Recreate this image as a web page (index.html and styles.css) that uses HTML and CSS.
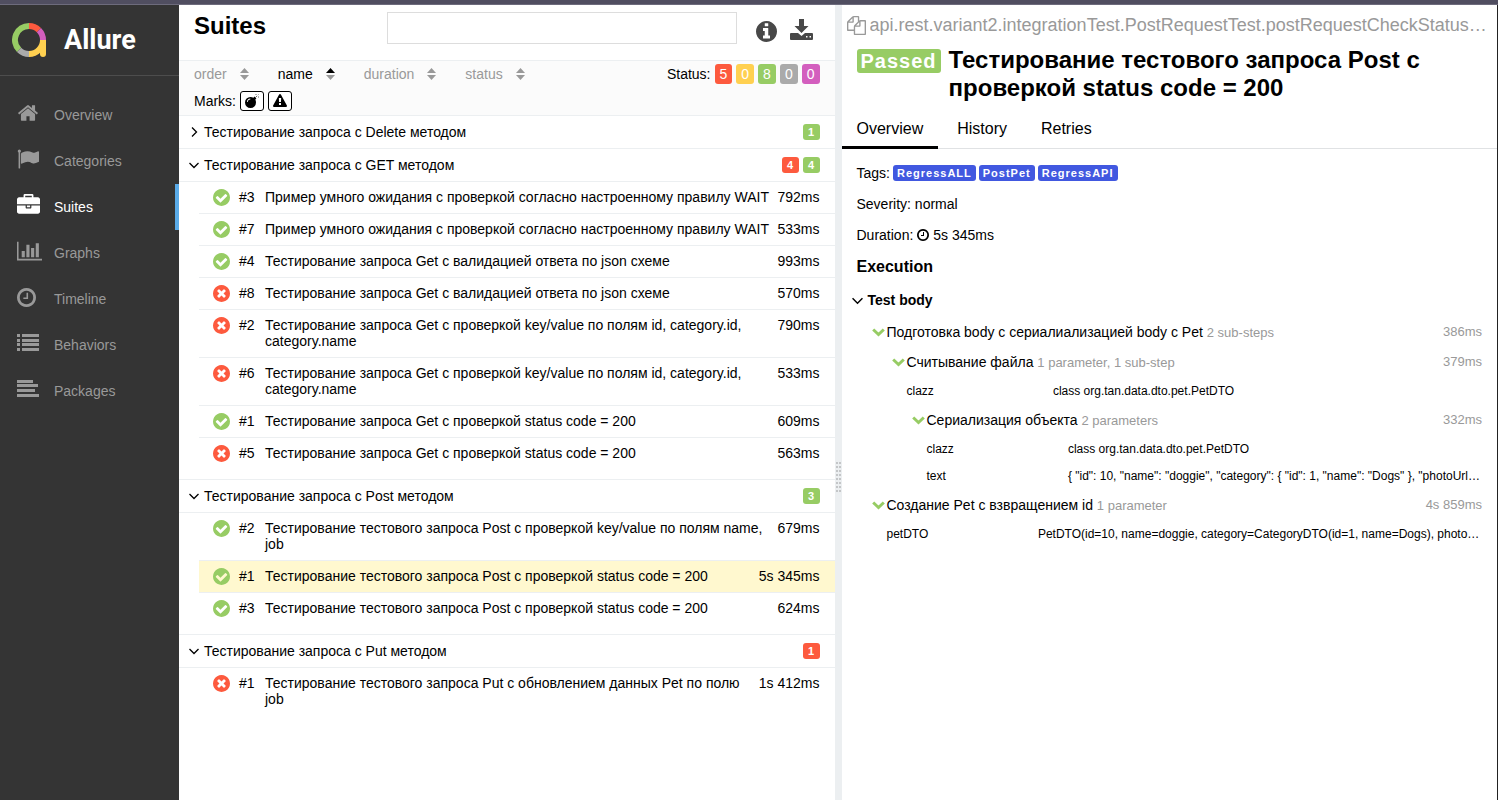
FILE: index.html
```html
<!DOCTYPE html>
<html lang="ru">
<head>
<meta charset="utf-8">
<title>Allure Report</title>
<link rel="stylesheet" href="styles.css">
</head>
<body>
<svg class="sprite" aria-hidden="true">
  <symbol id="home" viewBox="0 0 1792 1792"><path d="M1472 992v480q0 26-19 45t-45 19h-384v-384h-256v384h-384q-26 0-45-19t-19-45v-480q0-1 .5-3t.5-3l575-474 575 474q1 2 1 6zm223-69l-62 74q-8 9-21 11h-3q-13 0-21-7l-692-577-692 577q-12 8-24 7-13-2-21-11l-62-74q-8-10-7-23.5t11-21.5l719-599q32-26 76-26t76 26l244 204v-195q0-14 9-23t23-9h192q14 0 23 9t9 23v408l219 182q10 8 11 21.5t-7 23.5z"/></symbol>
  <symbol id="flag" viewBox="0 0 1792 1792"><path d="M320 256q0 72-64 110v1266q0 13-9.500 22.500t-22.500 9.500h-64q-13 0-22.500-9.500t-9.500-22.500v-1266q-64-38-64-110 0-53 37.500-90.500t90.500-37.500 90.500 37.500 37.500 90.500zm1472 64v763q0 25-12.500 38.500t-39.500 27.500q-215 116-369 116-61 0-123.500-22t-108.500-48-115.500-48-142.500-22q-192 0-464 146-17 9-33 9-26 0-45-19t-19-45v-742q0-32 31-55 21-14 79-43 236-120 421-120 107 0 200 29t219 88q38 19 88 19 54 0 117.500-21t110-47 88-47 54.500-21q26 0 45 19t19 45z"/></symbol>
  <symbol id="briefcase" viewBox="0 0 1792 1792"><path d="M640 256h512v-128h-512v128zm1152 640v480q0 66-47 113t-113 47h-1472q-66 0-113-47t-47-113v-480h672v160q0 26 19 45t45 19h320q26 0 45-19t19-45v-160h672zm-768 0v128h-256v-128h256zm768-480v384h-1792v-384q0-66 47-113t113-47h352v-160q0-40 28-68t68-28h576q40 0 68 28t28 68v160h352q66 0 113 47t47 113z"/></symbol>
  <symbol id="chart" viewBox="0 0 2048 1792"><path d="M640 896v512h-256v-512h256zm384-512v1024h-256v-1024h256zm1024 1152v128h-2048v-1536h128v1408h1920zm-640-896v768h-256v-768h256zm384-384v1152h-256v-1152h256z"/></symbol>
  <symbol id="clock" viewBox="128 128 1536 1536"><path d="M1024 544v448q0 14-9 23t-23 9h-320q-14 0-23-9t-9-23v-64q0-14 9-23t23-9h224v-352q0-14 9-23t23-9h64q14 0 23 9t9 23zm416 352q0-148-73-273t-198-198-273-73-273 73-198 198-73 273 73 273 198 198 273 73 273-73 198-198 73-273zm224 0q0 209-103 385.500t-279.500 279.500-385.500 103-385.500-103-279.500-279.500-103-385.500 103-385.500 279.500-279.500 385.500-103 385.500 103 279.500 279.500 103 385.500z"/></symbol>
  <symbol id="list" viewBox="0 0 22 18"><path d="M0 0h3v3H0zM5 0h17v3H5zM0 5h3v3H0zM5 5h17v3H5zM0 9h3v3H0zM5 9h17v3H5zM0 14h3v3H0zM5 14h17v3H5z"/></symbol>
  <symbol id="align" viewBox="0 0 22 18"><path d="M0 0h16v3H0zM0 4h21v3H0zM0 9h18v3H0zM0 14h22v3H0z"/></symbol>
  <symbol id="info" viewBox="128 128 1536 1536"><path d="M1152 1376v-160q0-14-9-23t-23-9h-96v-512q0-14-9-23t-23-9h-320q-14 0-23 9t-9 23v160q0 14 9 23t23 9h96v320h-96q-14 0-23 9t-9 23v160q0 14 9 23t23 9h448q14 0 23-9t9-23zm-128-896v-160q0-14-9-23t-23-9h-192q-14 0-23 9t-9 23v160q0 14 9 23t23 9h192q14 0 23-9t9-23zm640 416q0 209-103 385.500t-279.500 279.500-385.500 103-385.500-103-279.500-279.500-103-385.500 103-385.500 279.500-279.500 385.500-103 385.500 103 279.500 279.500 103 385.500z"/></symbol>
  <symbol id="download" viewBox="0 0 23 21"><path fill-rule="evenodd" d="M9 0h5v7h4.500l-7 7-7-7H9zM1 14h7l3.500 3 3.500-3h7q1 0 1 1v5q0 1-1 1H1q-1 0-1-1v-5q0-1 1-1zm15 3v1.500h1.500V17zm3.500 0v1.500H21V17z"/></symbol>
  <symbol id="passed" viewBox="128 128 1536 1536"><path d="M1412 734q0-28-18-46l-91-90q-19-19-45-19t-45 19l-408 407-226-226q-19-19-45-19t-45 19l-91 90q-18 18-18 46 0 27 18 45l362 362q19 19 45 19 27 0 46-19l543-543q18-18 18-45zm252 162q0 209-103 385.500t-279.500 279.500-385.500 103-385.500-103-279.500-279.500-103-385.500 103-385.500 279.500-279.500 385.500-103 385.500 103 279.500 279.500 103 385.500z"/></symbol>
  <symbol id="failed" viewBox="128 128 1536 1536"><path d="M1277 1122q0-26-19-45l-181-181 181-181q19-19 19-45 0-27-19-46l-90-90q-19-19-46-19-26 0-45 19l-181 181-181-181q-19-19-45-19-27 0-46 19l-90 90q-19 19-19 46 0 26 19 45l181 181-181 181q-19 19-19 45 0 27 19 46l90 90q19 19 46 19 26 0 45-19l181-181 181 181q19 19 45 19 27 0 46-19l90-90q19-19 19-46zm387-226q0 209-103 385.500t-279.500 279.500-385.500 103-385.500-103-279.500-279.500-103-385.500 103-385.500 279.500-279.500 385.500-103 385.500 103 279.500 279.500 103 385.500z"/></symbol>
  <symbol id="warning" viewBox="0 0 1792 1792"><path d="M1024 1375v-190q0-14-9.500-23.500t-22.500-9.500h-192q-13 0-22.500 9.500t-9.500 23.500v190q0 14 9.500 23.500t22.500 9.500h192q13 0 22.500-9.500t9.500-23.500zm-2-374l18-459q0-12-10-19-13-11-24-11h-220q-11 0-24 11-10 7-10 21l17 457q0 10 10 16.500t24 6.500h185q14 0 23.500-6.500t10.500-16.500zm-14-934l768 1408q35 63-2 126-17 29-46.500 46t-63.500 17h-1536q-34 0-63.500-17t-46.500-46q-37-63-2-126l768-1408q17-31 47-49t65-18 65 18 47 49z"/></symbol>
  <symbol id="bomb" viewBox="0 0 14 14"><path fill-rule="evenodd" d="M5.500 3c1.200 0 2 .2 2.900.7L9.500 2.600l1.900 1.900-1.100 1.100c.5.900.7 1.800.7 2.900A5.500 5.500 0 1 1 5.500 3zM2 8h.8c0-1.500 1-2.500 2.500-2.600v-.8C3.300 4.700 2 6 2 8z"/><path d="M10.500 3.500L12 2M11 1V0M13 3h1M12.800 1.200l.7-.7" fill="none" stroke="currentColor" stroke-width=".6"/></symbol>
  <symbol id="copy" viewBox="0 0 1792 1792"><path d="M1696 384q40 0 68 28t28 68v1216q0 40-28 68t-68 28h-960q-40 0-68-28t-28-68v-288h-544q-40 0-68-28t-28-68v-672q0-40 20-88t48-76l408-408q28-28 76-48t88-20h416q40 0 68 28t28 68v328q68-40 128-40h416zm-544 213l-299 299h299v-299zm-640-384l-299 299h299v-299zm196 647l316-316v-416h-384v416q0 40-28 68t-68 28h-416v640h512v-256q0-40 20-88t48-76zm956 804v-1152h-384v416q0 40-28 68t-68 28h-416v640h896z"/></symbol>
  <symbol id="down" viewBox="0 0 10 10"><path d="M.5 3L5 7.500 9.500 3" fill="none" stroke="currentColor" stroke-width="1.300"/></symbol>
  <symbol id="right" viewBox="0 0 10 10"><path d="M3 .5L7.500 5 3 9.500" fill="none" stroke="currentColor" stroke-width="1.300"/></symbol>
  <symbol id="chevron" viewBox="0 0 13 9"><path d="M1.200 1.500L6.500 6.500 11.800 1.500" fill="none" stroke="currentColor" stroke-width="3"/></symbol>
  <symbol id="sort" viewBox="0 0 9 12"><path d="M4.500 0L9 5H0z"/><path fill="#999" d="M4.500 12L9 7H0z"/></symbol>
</svg>

<div class="topbar"></div>
<div class="app">
  <nav class="side">
    <a class="brand" href="#">
      <svg class="logo" viewBox="0 0 34 34" stroke-width="6">
        <path stroke="#97cc64" d="M17 3A14 14 0 0 0 7.100 26.900"/>
        <path stroke="#aaa" d="M7.100 26.900A14 14 0 0 0 17 31"/>
        <path stroke="#fd5a3e" d="M17 3A14 14 0 0 1 26.900 7.100"/>
        <path stroke="#d35ebe" d="M26.900 7.100A14 14 0 0 1 31 17"/>
        <path stroke="#ffd050" d="M17 31A14 14 0 0 0 31 17"/>
        <path stroke="#ffd050" stroke-linecap="round" d="M31 20V31"/>
        <path stroke="#ffd050" d="M31 17V24"/>
      </svg>
      <span>Allure</span>
    </a>
    <ul class="menu">
      <li><a href="#"><span class="menu-icon"><svg class="i22"><use href="#home"/></svg></span>Overview</a></li>
      <li><a href="#"><span class="menu-icon"><svg class="i22"><use href="#flag"/></svg></span>Categories</a></li>
      <li><a href="#" class="current" aria-current="page"><span class="menu-icon"><svg class="i24"><use href="#briefcase"/></svg></span>Suites</a></li>
      <li><a href="#"><span class="menu-icon"><svg class="wide"><use href="#chart"/></svg></span>Graphs</a></li>
      <li><a href="#"><span class="menu-icon"><svg class="i19"><use href="#clock"/></svg></span>Timeline</a></li>
      <li><a href="#"><span class="menu-icon"><svg class="bars"><use href="#list"/></svg></span>Behaviors</a></li>
      <li><a href="#"><span class="menu-icon"><svg class="bars"><use href="#align"/></svg></span>Packages</a></li>
    </ul>
  </nav>

  <main class="pane">
    <header class="pane-head">
      <h1>Suites</h1>
      <input class="search" type="text" aria-label="Search">
      <button class="tool" aria-label="Info"><svg class="i21"><use href="#info"/></svg></button>
      <button class="tool" aria-label="Download"><svg class="dl"><use href="#download"/></svg></button>
    </header>
    <div class="filters">
      <div class="filter-line">
        <button class="sorter">order<svg><use href="#sort"/></svg></button>
        <button class="sorter active">name<svg><use href="#sort"/></svg></button>
        <button class="sorter">duration<svg><use href="#sort"/></svg></button>
        <button class="sorter">status<svg><use href="#sort"/></svg></button>
        <div class="statuses"><span>Status:</span>
          <button class="st red">5</button><button class="st yellow">0</button><button class="st green">8</button><button class="st gray">0</button><button class="st purple">0</button>
        </div>
      </div>
      <div class="filter-line marks"><span>Marks:</span>
        <button class="mark" aria-label="Flaky"><svg><use href="#bomb"/></svg></button>
        <button class="mark" aria-label="New failed"><svg><use href="#warning"/></svg></button>
      </div>
    </div>
    <div class="tree">
      <section>
        <button class="group"><svg><use href="#right"/></svg><span class="name">Тестирование запроса с Delete методом</span><span class="count green">1</span></button>
      </section>
      <section>
        <button class="group"><svg><use href="#down"/></svg><span class="name">Тестирование запроса с GET методом</span><span class="count red">4</span><span class="count green">4</span></button>
        <div class="tests">
          <a class="test" href="#"><svg class="ok"><use href="#passed"/></svg><span class="num">#3</span><span class="name">Пример умного ожидания с проверкой согласно настроенному правилу WAIT</span><span class="time">792ms</span></a>
          <a class="test" href="#"><svg class="ok"><use href="#passed"/></svg><span class="num">#7</span><span class="name">Пример умного ожидания с проверкой согласно настроенному правилу WAIT</span><span class="time">533ms</span></a>
          <a class="test" href="#"><svg class="ok"><use href="#passed"/></svg><span class="num">#4</span><span class="name">Тестирование запроса Get с валидацией ответа по json схеме</span><span class="time">993ms</span></a>
          <a class="test" href="#"><svg class="bad"><use href="#failed"/></svg><span class="num">#8</span><span class="name">Тестирование запроса Get с валидацией ответа по json схеме</span><span class="time">570ms</span></a>
          <a class="test" href="#"><svg class="bad"><use href="#failed"/></svg><span class="num">#2</span><span class="name">Тестирование запроса Get с проверкой key/value по полям id, category.id, category.name</span><span class="time">790ms</span></a>
          <a class="test" href="#"><svg class="bad"><use href="#failed"/></svg><span class="num">#6</span><span class="name">Тестирование запроса Get с проверкой key/value по полям id, category.id, category.name</span><span class="time">533ms</span></a>
          <a class="test" href="#"><svg class="ok"><use href="#passed"/></svg><span class="num">#1</span><span class="name">Тестирование запроса Get с проверкой status code = 200</span><span class="time">609ms</span></a>
          <a class="test" href="#"><svg class="bad"><use href="#failed"/></svg><span class="num">#5</span><span class="name">Тестирование запроса Get с проверкой status code = 200</span><span class="time">563ms</span></a>
        </div>
      </section>
      <section>
        <button class="group"><svg><use href="#down"/></svg><span class="name">Тестирование запроса с Post методом</span><span class="count green">3</span></button>
        <div class="tests">
          <a class="test" href="#"><svg class="ok"><use href="#passed"/></svg><span class="num">#2</span><span class="name">Тестирование тестового запроса Post с проверкой key/value по полям name, job</span><span class="time">679ms</span></a>
          <a class="test selected" href="#"><svg class="ok"><use href="#passed"/></svg><span class="num">#1</span><span class="name">Тестирование тестового запроса Post с проверкой status code = 200</span><span class="time">5s 345ms</span></a>
          <a class="test" href="#"><svg class="ok"><use href="#passed"/></svg><span class="num">#3</span><span class="name">Тестирование тестового запроса Post с проверкой status code = 200</span><span class="time">624ms</span></a>
        </div>
      </section>
      <section>
        <button class="group"><svg><use href="#down"/></svg><span class="name">Тестирование запроса с Put методом</span><span class="count red">1</span></button>
        <div class="tests">
          <a class="test" href="#"><svg class="bad"><use href="#failed"/></svg><span class="num">#1</span><span class="name">Тестирование тестового запроса Put с обновлением данных Pet по полю job</span><span class="time">1s 412ms</span></a>
        </div>
      </section>
    </div>
  </main>

  <div class="gutter"><span class="grip"></span></div>

  <article class="pane detail">
    <div class="path"><button class="copy" aria-label="Copy"><svg><use href="#copy"/></svg></button><span class="clip">api.rest.variant2.integrationTest.PostRequestTest.postRequestCheckStatusCode</span></div>
    <div class="title"><span class="verdict">Passed</span><h2>Тестирование тестового запроса Post с проверкой status code = 200</h2></div>
    <nav class="tabs"><a href="#" class="on">Overview</a><a href="#">History</a><a href="#">Retries</a></nav>
    <div class="body">
      <div class="fact tags"><span>Tags:</span><span class="tag">RegressALL</span><span class="tag">PostPet</span><span class="tag">RegressAPI</span></div>
      <div class="fact">Severity: normal</div>
      <div class="fact">Duration: <svg class="mini"><use href="#clock"/></svg> 5s 345ms</div>
      <h3>Execution</h3>
      <button class="stage"><svg><use href="#down"/></svg>Test body</button>
      <div class="nest">
        <button class="step"><svg><use href="#chevron"/></svg><span>Подготовка body с сериалиализацией body с Pet <small>2 sub-steps</small></span><small class="took">386ms</small></button>
        <div class="nest">
          <button class="step"><svg><use href="#chevron"/></svg><span>Считывание файла <small>1 parameter, 1 sub-step</small></span><small class="took">379ms</small></button>
          <div class="params"><table><tr><th>clazz</th><td>class org.tan.data.dto.pet.PetDTO</td></tr></table></div>
          <div class="nest">
            <button class="step"><svg><use href="#chevron"/></svg><span>Сериализация объекта <small>2 parameters</small></span><small class="took">332ms</small></button>
            <div class="params"><table><tr><th>clazz</th><td>class org.tan.data.dto.pet.PetDTO</td></tr><tr><th>text</th><td>{ "id": 10, "name": "doggie", "category": { "id": 1, "name": "Dogs" }, "photoUrls": [ "string" ] }</td></tr></table></div>
          </div>
        </div>
        <button class="step"><svg><use href="#chevron"/></svg><span>Создание Pet с взвращением id <small>1 parameter</small></span><small class="took">4s 859ms</small></button>
        <div class="params"><table><tr><th>petDTO</th><td>PetDTO(id=10, name=doggie, category=CategoryDTO(id=1, name=Dogs), photoUrls=[string])</td></tr></table></div>
      </div>
    </div>
  </article>
</div>
</body>
</html>
```
FILE: styles.css
```css
* { box-sizing: border-box; }

body {
  margin: 0;
  min-height: 100vh;
  display: flex;
  flex-direction: column;
  font: 14px/16px "Liberation Sans", Arial, sans-serif;
  color: #000;
  background: #fff;
}

button {
  font: inherit;
  color: inherit;
  background: none;
  border: 0;
  padding: 0;
  text-align: left;
}

a { color: inherit; text-decoration: none; }
svg { fill: currentColor; flex: none; display: block; }
h1, h2, h3 { margin: 0; }
.sprite { position: absolute; width: 0; height: 0; }

.topbar { height: 5px; background: #504e60; border-bottom: 1px solid #6d6b7c; }
.app { flex: 1; display: flex; border-right: 1px solid #222; }

/* Sidebar */
.side { width: 179px; flex: none; background: #343434; color: #999; }
.brand {
  display: flex;
  align-items: center;
  gap: 18px;
  height: 71px;
  padding-left: 12px;
  border-bottom: 1px solid #4d4d4d;
  color: #fff;
  font: bold 27px/32px Roboto, sans-serif;
}
.logo { width: 34px; height: 34px; fill: none; }
.menu { list-style: none; margin: 0; padding: 16px 0 0; }
.menu a { display: flex; align-items: center; height: 46px; padding-left: 17px; border-right: 4px solid transparent; }
.menu a.current { color: #fff; border-color: #5aabe8; }
.menu-icon { width: 37px; display: flex; margin-bottom: 4px; }
.i19 { width: 19px; height: 19px; }
.i21 { width: 21px; height: 21px; }
.i22 { width: 22px; height: 22px; }
.i24 { width: 23px; height: 23px; }
.wide { width: 25px; height: 22px; }
.bars { width: 22px; height: 18px; }

/* Suites pane */
.pane { flex: 1 1 0; min-width: 0; }
.pane-head { display: flex; align-items: flex-start; height: 55px; padding: 7px 22px 0 15px; }
.pane-head h1 { flex: 1; font-size: 24px; line-height: 28px; }
.search { width: 350px; height: 32px; border: 1px solid #ddd; padding: 0 8px; font: inherit; }
.tool { color: #484848; margin: 9px 0 0 19px; }
.tool + .tool { margin: 7px 0 0 13px; }
.dl { width: 23px; height: 21px; }

.filters { background: #fbfbfb; border-top: 1px solid #eceff1; border-bottom: 1px solid #eceff1; padding: 0 15px; height: 56px; }
.filter-line { display: flex; align-items: center; height: 26px; }
.sorter { display: flex; align-items: center; gap: 13px; margin-right: 29px; color: #999; }
.sorter svg { width: 9px; height: 12px; }
.sorter.active { color: #000; }
.statuses { display: flex; align-items: center; gap: 4px; margin-left: auto; }
.st { height: 20px; padding: 0 5px; border-radius: 3px; color: #fff; }
.red { background: #fd5a3e; }
.yellow { background: #ffd050; }
.green { background: #97cc64; }
.gray { background: #aaa; }
.purple { background: #d35ebe; }
.filter-line.marks { gap: 4px; height: 28px; }
.mark { width: 24px; height: 20px; border: 1px solid #000; border-radius: 3px; background: #fff; display: grid; place-items: center; }
.mark svg { width: 14px; height: 14px; }

.group { display: flex; align-items: center; width: 100%; height: 33px; padding: 0 15px 0 10px; border-bottom: 1px solid #eceff1; }
.group svg { width: 10px; height: 10px; margin-right: 5px; }
.name { flex: 1; }
.count { height: 16px; min-width: 17px; margin-left: 4px; padding: 0 5px; border-radius: 3px; color: #fff; font-weight: bold; font-size: 11px; text-align: center; }
.tests { padding-bottom: 10px; border-bottom: 1px solid #eceff1; }
section:last-child .tests { border: 0; }
.test { display: flex; margin-left: 20px; padding: 7px 15px 8px 14px; border-bottom: 1px solid #eceff1; }
.test:last-child { border: 0; }
.test svg { width: 17px; height: 17px; margin-bottom: -1px; }
.ok { color: #97cc64; }
.bad { color: #fd5a3e; }
.num { width: 26px; margin-left: 9px; }
.time { padding-left: 8px; white-space: nowrap; }
.selected { background: #fff8cf; }

.gutter { width: 7px; flex: none; background: #eceff1; display: grid; place-items: center; }
.grip {
  width: 5px;
  height: 30px;
  margin-top: 149px;
  background:
    repeating-linear-gradient(transparent 0 2px, #eceff1 2px 4px),
    repeating-linear-gradient(90deg, #c4c6c8 0 2px, transparent 2px 3px);
}

/* Test detail */
.path { display: flex; align-items: center; gap: 4px; height: 40px; padding: 0 9px 0 5px; font-size: 18px; line-height: 22px; color: #999; }
.copy svg { width: 19px; height: 19px; }
.clip { flex: 1; overflow: hidden; text-overflow: ellipsis; white-space: nowrap; }
.title { display: flex; align-items: flex-start; gap: 8px; padding: 1px 15px 0; }
.title h2 { font-size: 24px; line-height: 28px; }
.verdict { margin-top: 3px; padding: 0 4px; border-radius: 3px; background: #97cc64; color: #fff; font-weight: bold; font-size: 20px; line-height: 24px; letter-spacing: 1px; }
.tabs { display: flex; gap: 4px; margin-top: 7px; border-bottom: 1px solid #e0e2e4; font-size: 16px; line-height: 20px; }
.tabs a { padding: 10px 15px 7px; border-bottom: 3px solid transparent; margin-bottom: -1px; }
.tabs .on { border-color: #000; }
.body { padding: 8px 15px; }
.fact { display: flex; align-items: center; gap: 4px; height: 31px; }
.tags { gap: 3px; }
.tag { padding: 0 4px; border-radius: 3px; background: #4158e0; color: #fff; font-size: 11px; font-weight: bold; letter-spacing: 1px; }
.mini { width: 12px; height: 12px; }
.body h3 { font-size: 16px; line-height: 33px; }
.stage { display: flex; align-items: center; gap: 5px; height: 34px; margin-left: -5px; font-weight: bold; }
.stage svg { width: 11px; height: 11px; }
.nest { padding-left: 15px; }
.nest .nest { padding-left: 20px; }
.step { display: flex; align-items: center; width: 100%; height: 30px; gap: 2px; }
.step svg { width: 13px; height: 9px; color: #97cc64; }
small { font-size: 13px; color: #999; }
.took { margin-left: auto; }
.params { margin: 0 -5px 1px 10px; }
.params table { width: 100%; table-layout: fixed; border-collapse: collapse; font-size: 12px; }
.params th { width: 25%; font-weight: normal; text-align: left; padding: 0 5px; height: 27px; }
.params td { padding: 0 5px; overflow: hidden; text-overflow: ellipsis; white-space: nowrap; }
```
